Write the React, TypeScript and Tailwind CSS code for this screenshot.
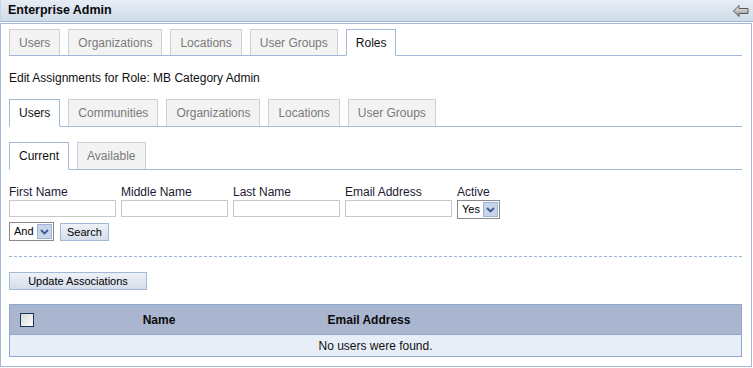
import React from "react";

const font = { fontFamily: '"Liberation Sans", Arial, sans-serif' };

function Tab({ label, active, tall }: { label: string; active?: boolean; tall?: boolean }) {
  const size = active
    ? tall
      ? "h-[28px] -mb-px"
      : "h-[27px] -mb-px"
    : tall
    ? "h-[27px]"
    : "h-[26px]";
  return (
    <div
      className={`${size} px-[9px] flex items-center text-[12px] border ${
        active
          ? "bg-white border-[#a3b8d6] border-b-white text-[#111]"
          : "bg-[#f3f3f3] border-[#cfcfcf] border-b-0 text-[#7a7a7a]"
      }`}
    >
      {label}
    </div>
  );
}

function TabRow({ tabs, active, tall }: { tabs: string[]; active: string; tall?: boolean }) {
  return (
    <div className="flex items-end gap-[8px] border-b border-[#a3b8d6]">
      {tabs.map((t) => (
        <Tab key={t} label={t} active={t === active} tall={tall} />
      ))}
    </div>
  );
}

function Dropdown({ value, width }: { value: string; width: string }) {
  return (
    <div
      className={`${width} h-[19px] flex items-center border border-[#8a8a8a] bg-white text-[11px] text-black`}
    >
      <span className="flex-1 pl-[4px]">{value}</span>
      <span className="w-[15px] h-[15px] mr-px flex items-center justify-center bg-[#c7d5ea] border border-[#9db2d4]">
        <svg width="9" height="6" viewBox="0 0 9 6">
          <path d="M1 1 L4.5 4.5 L8 1" stroke="#3d5a8a" strokeWidth="1.8" fill="none" />
        </svg>
      </span>
    </div>
  );
}

export default function App() {
  const fields = ["First Name", "Middle Name", "Last Name", "Email Address"];

  return (
    <div className="w-[753px] h-[368px] bg-white overflow-hidden" style={font}>
      <div className="h-[22px] flex items-center justify-between pl-[7px] pr-[4px] bg-gradient-to-b from-[#e6edf5] to-[#cfdbe9] border-b border-[#a3b8d6] border-l border-l-[#c5d3e4]">
        <span className="text-[12.5px] font-bold text-[#0a0a0a]">Enterprise Admin</span>
        <svg width="16" height="12" viewBox="0 0 16 12">
          <defs>
            <linearGradient id="ag" x1="0" y1="0" x2="0" y2="1">
              <stop offset="0" stopColor="#f4f4f4" />
              <stop offset="1" stopColor="#8c8c8c" />
            </linearGradient>
          </defs>
          <path
            d="M0.5 6 L6 0.5 L6 3.5 L15 3.5 L15 8.5 L6 8.5 L6 11.5 Z"
            fill="url(#ag)"
            stroke="#5a5a5a"
            strokeWidth="1"
          />
        </svg>
      </div>

      <div className="mt-px w-[752px] h-[344px] border border-[#a3b8d6] pl-[8px] pr-[9px] pt-[5px]">
        <TabRow
          tabs={["Users", "Organizations", "Locations", "User Groups", "Roles"]}
          active="Roles"
        />

        <div className="mt-[14px] text-[12px] text-[#111] leading-[16px]">
          Edit Assignments for Role: MB Category Admin
        </div>

        <div className="mt-[13px]">
          <TabRow
            tabs={["Users", "Communities", "Organizations", "Locations", "User Groups"]}
            active="Users"
            tall
          />
        </div>

        <div className="mt-[15px]">
          <TabRow tabs={["Current", "Available"]} active="Current" tall />
        </div>

        <div className="mt-[14px] flex gap-[5px]">
          {fields.map((f) => (
            <div key={f} className="w-[107px] flex flex-col">
              <span className="text-[12px] leading-[16px] text-[#1a1a33]">{f}</span>
              <div className="h-[17px] border border-[#c8c8c8] bg-white" />
            </div>
          ))}
          <div className="flex flex-col">
            <span className="text-[12px] leading-[16px] text-[#1a1a33]">Active</span>
            <Dropdown value="Yes" width="w-[43px]" />
          </div>
        </div>

        <div className="mt-[3px] flex items-center gap-[6px]">
          <Dropdown value="And" width="w-[45px]" />
          <button className="block h-[18px] px-[6px] text-[11px] text-black border border-[#a3b8d6] bg-gradient-to-b from-[#eef2f8] to-[#d6dfeb]">
            Search
          </button>
        </div>

        <div className="mt-[15px] border-t border-dashed border-[#9fb4d2]" />

        <button className="block mt-[15px] w-[138px] h-[18px] text-[11px] text-black border border-[#a3b8d6] bg-gradient-to-b from-[#eef2f8] to-[#d4ddea]">
          Update Associations
        </button>

        <div className="mt-[14px] border border-[#8fa9cc]">
          <div className="h-[29px] bg-[#aab5d0] flex items-center text-[12px] font-bold text-[#0a0a0a]">
            <div className="w-[34px] flex justify-center">
              <span className="w-[14px] h-[14px] border border-[#1c355e] bg-gradient-to-br from-[#d8d8d8] to-white" />
            </div>
            <div className="w-[230px] text-center">Name</div>
            <div className="w-[190px] text-center">Email Address</div>
          </div>
          <div className="h-[22px] bg-[#e7eef7] border-t border-[#8fa9cc] flex items-center justify-center text-[12px] text-[#111]">
            No users were found.
          </div>
        </div>
      </div>
    </div>
  );
}
